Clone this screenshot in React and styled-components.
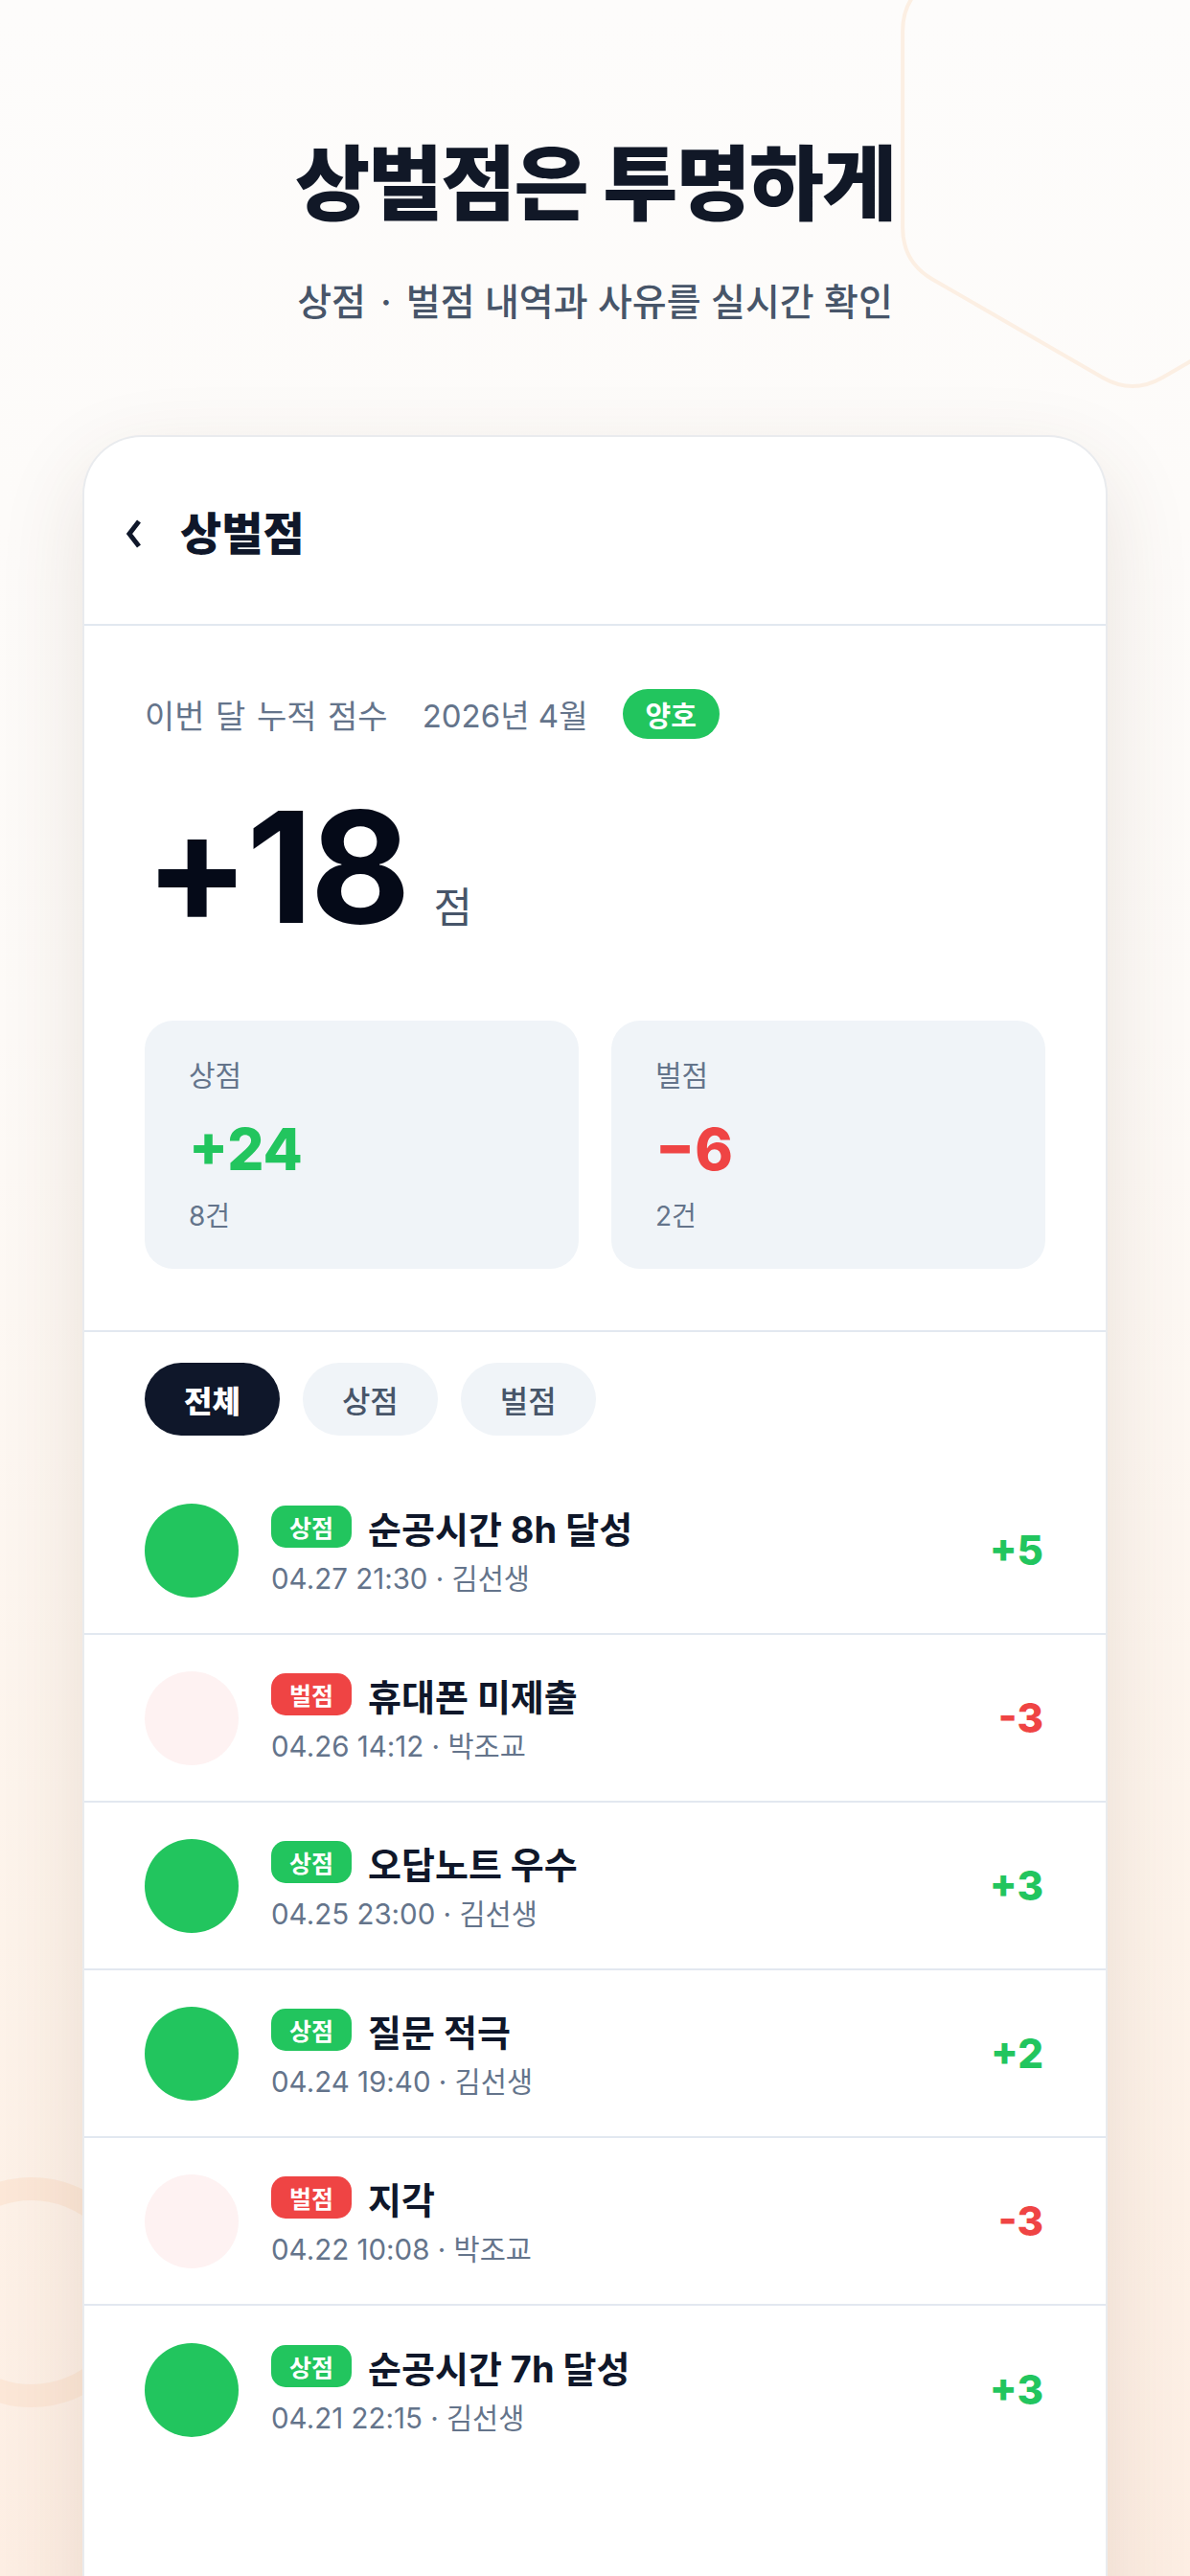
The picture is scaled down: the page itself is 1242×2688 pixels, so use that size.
import React from 'react';
import styled, { createGlobalStyle } from 'styled-components';

const GlobalStyle = createGlobalStyle`
  * {
    box-sizing: border-box;
  }

  body {
    margin: 0;
    font-family: Inter, 'Noto Sans CJK KR', sans-serif;
    color: #0f172a;
  }
`;

const StyledPage = styled.div`
  position: relative;
  width: 1242px;
  height: 2688px;
  overflow: hidden;
  background: linear-gradient(180deg, #fdfcfb 0%, #fdfaf7 40%, #fdf3ea 75%, #fdeee3 100%);
`;

const StyledDecor = styled.svg`
  position: absolute;
  pointer-events: none;
`;

const StyledHero = styled.header`
  position: relative;
  display: flex;
  flex-direction: column;
  align-items: center;
  padding-top: 143px;
  height: 454px;

  h1 {
    margin: 0;
    font-size: 85px;
    line-height: 100px;
    font-weight: 800;
    letter-spacing: -2px;
    color: #111827;
  }

  p {
    margin: 48px 0 0;
    font-size: 39px;
    line-height: 48px;
    font-weight: 500;
    color: #475569;
  }

  p b {
    margin: 0 15px;
    font-weight: 500;
  }
`;

const StyledPhone = styled.section`
  position: relative;
  margin: 0 86px;
  height: 2300px;
  background: #fff;
  border: 2px solid #e9ebee;
  border-bottom: none;
  border-radius: 62px 62px 0 0;
  box-shadow: 0 30px 90px rgba(90, 60, 30, 0.12);
`;

const StyledTopBar = styled.div`
  display: flex;
  align-items: center;
  gap: 40px;
  height: 197px;
  padding: 6px 44px 0;
  border-bottom: 2px solid #e2e8f0;

  h2 {
    margin: 0;
    font-size: 47px;
    line-height: 56px;
    font-weight: 800;
    color: #0f172a;
  }
`;

const StyledSummary = styled.div`
  padding: 66px 63px 64px;
  border-bottom: 2px solid #e2e8f0;
`;

const StyledMetaRow = styled.div`
  display: flex;
  align-items: center;
  gap: 36px;
  height: 52px;
  font-size: 33px;
  color: #64748b;

  .label {
    font-size: 34px;
    word-spacing: 2px;
  }
`;

const StyledPill = styled.span`
  display: inline-flex;
  align-items: center;
  justify-content: center;
  height: 52px;
  padding: 0 24px;
  border-radius: 26px;
  background: ${({ tone }) => (tone === 'red' ? '#ef4444' : '#22c55e')};
  color: #fff;
  font-size: 29px;
  font-weight: 700;
`;

const StyledTotal = styled.div`
  display: flex;
  align-items: baseline;
  margin-top: 54px;

  strong {
    font-size: 161px;
    line-height: 160px;
    font-weight: 700;
    letter-spacing: -3px;
    color: #050a18;
  }

  span {
    margin-left: 27px;
    font-size: 44px;
    color: #475569;
  }
`;

const StyledStatGrid = styled.div`
  display: grid;
  grid-template-columns: 1fr 1fr;
  gap: 34px;
  margin-top: 80px;
`;

const StyledStatCard = styled.div`
  display: flex;
  flex-direction: column;
  height: 259px;
  padding: 36px 46px;
  border-radius: 30px;
  background: #f0f4f8;

  .label {
    font-size: 30px;
    line-height: 42px;
    color: #64748b;
  }

  .value {
    margin-top: 21px;
    font-size: 60px;
    line-height: 70px;
    font-weight: 800;
    color: ${({ tone }) => (tone === 'red' ? '#ef4444' : '#22c55e')};
  }

  .count {
    margin-top: 16px;
    font-size: 28px;
    line-height: 38px;
    color: #64748b;
  }
`;

const StyledFilters = styled.div`
  display: flex;
  gap: 24px;
  padding: 32px 63px 33px;
`;

const StyledChip = styled.button`
  height: 76px;
  padding: 0 41px;
  border: none;
  border-radius: 38px;
  font-family: inherit;
  font-size: 32px;
  font-weight: ${({ active }) => (active ? 800 : 500)};
  background: ${({ active }) => (active ? '#0f172a' : '#f0f4f8')};
  color: ${({ active }) => (active ? '#fff' : '#475569')};
`;

const StyledRow = styled.div`
  display: flex;
  align-items: center;
  height: 175px;
  padding: 0 65px 0 63px;
  border-bottom: 2px solid #e2e8f0;

  &:last-child {
    border-bottom: none;
  }
`;

const StyledDot = styled.div`
  flex: none;
  width: 98px;
  height: 98px;
  border-radius: 50%;
  background: ${({ tone }) => (tone === 'red' ? '#fef2f2' : '#22c55e')};
`;

const StyledRowBody = styled.div`
  display: flex;
  flex-direction: column;
  gap: 13px;
  margin-left: 34px;
`;

const StyledRowHead = styled.div`
  display: flex;
  align-items: center;
  gap: 17px;
  height: 46px;
`;

const StyledRowTitle = styled.span`
  font-size: 38px;
  font-weight: 700;
  color: #0f172a;
`;

const StyledTag = styled.span`
  display: inline-flex;
  align-items: center;
  height: 44px;
  padding: 0 19px;
  border-radius: 15px;
  background: ${({ tone }) => (tone === 'red' ? '#ef4444' : '#22c55e')};
  color: #fff;
  font-size: 25px;
  font-weight: 700;
`;

const StyledRowMeta = styled.div`
  font-size: 29.5px;
  line-height: 36px;
  color: #64748b;
`;

const StyledDelta = styled.div`
  margin-left: auto;
  font-size: 42px;
  font-weight: 800;
  color: ${({ tone }) => (tone === 'red' ? '#ef4444' : '#22c55e')};
`;

const hexPath = (cx, cy, r, round) => {
  const pts = [];
  for (let i = 0; i < 6; i += 1) {
    const a = ((-90 + i * 60) * Math.PI) / 180;
    pts.push([cx + r * Math.cos(a), cy + r * Math.sin(a)]);
  }
  const lerp = (a, b, t) => [a[0] + (b[0] - a[0]) * t, a[1] + (b[1] - a[1]) * t];
  let d = '';
  pts.forEach((p, i) => {
    const prev = pts[(i + 5) % 6];
    const next = pts[(i + 1) % 6];
    const t = round / r;
    const s = lerp(p, prev, t);
    const e = lerp(p, next, t);
    d += `${i === 0 ? 'M' : 'L'}${s[0]},${s[1]} Q${p[0]},${p[1]} ${e[0]},${e[1]} `;
  });
  return `${d}Z`;
};

const entries = [
  { id: 1, tone: 'green', tag: '상점', title: '순공시간 8h 달성', meta: '04.27 21:30 · 김선생', delta: '+5' },
  { id: 2, tone: 'red', tag: '벌점', title: '휴대폰 미제출', meta: '04.26 14:12 · 박조교', delta: '-3' },
  { id: 3, tone: 'green', tag: '상점', title: '오답노트 우수', meta: '04.25 23:00 · 김선생', delta: '+3' },
  { id: 4, tone: 'green', tag: '상점', title: '질문 적극', meta: '04.24 19:40 · 김선생', delta: '+2' },
  { id: 5, tone: 'red', tag: '벌점', title: '지각', meta: '04.22 10:08 · 박조교', delta: '-3' },
  { id: 6, tone: 'green', tag: '상점', title: '순공시간 7h 달성', meta: '04.21 22:15 · 김선생', delta: '+3' },
];

const App = () => (
  <StyledPage>
    <GlobalStyle />

    <StyledDecor width="1242" height="460" style={{ left: 0, top: 0 }}>
      <path d={hexPath(1182, 135, 277, 36)} fill="none" stroke="#fcefe3" strokeWidth="4" />
    </StyledDecor>
    <StyledDecor width="200" height="300" style={{ left: 0, top: 2242 }}>
      <circle cx="33" cy="150" r="108" fill="none" stroke="#fbe5d3" strokeWidth="24" opacity="0.8" />
    </StyledDecor>

    <StyledHero>
      <h1>상벌점은 투명하게</h1>
      <p>
        상점<b>·</b>벌점 내역과 사유를 실시간 확인
      </p>
    </StyledHero>

    <StyledPhone>
      <StyledTopBar>
        <svg width="16" height="30" viewBox="0 0 16 30">
          <polyline points="13,2 3,15 13,28" fill="none" stroke="#0f172a" strokeWidth="5" strokeLinejoin="miter" />
        </svg>
        <h2>상벌점</h2>
      </StyledTopBar>

      <StyledSummary>
        <StyledMetaRow>
          <span className="label">이번 달 누적 점수</span>
          <span>2026년 4월</span>
          <StyledPill>양호</StyledPill>
        </StyledMetaRow>

        <StyledTotal>
          <strong>+18</strong>
          <span>점</span>
        </StyledTotal>

        <StyledStatGrid>
          <StyledStatCard tone="green">
            <span className="label">상점</span>
            <span className="value">+24</span>
            <span className="count">8건</span>
          </StyledStatCard>
          <StyledStatCard tone="red">
            <span className="label">벌점</span>
            <span className="value">−6</span>
            <span className="count">2건</span>
          </StyledStatCard>
        </StyledStatGrid>
      </StyledSummary>

      <StyledFilters>
        <StyledChip active>전체</StyledChip>
        <StyledChip>상점</StyledChip>
        <StyledChip>벌점</StyledChip>
      </StyledFilters>

      {entries.map(item => (
        <StyledRow key={item.id}>
          <StyledDot tone={item.tone} />
          <StyledRowBody>
            <StyledRowHead>
              <StyledTag tone={item.tone}>{item.tag}</StyledTag>
              <StyledRowTitle>{item.title}</StyledRowTitle>
            </StyledRowHead>
            <StyledRowMeta>{item.meta}</StyledRowMeta>
          </StyledRowBody>
          <StyledDelta tone={item.tone}>{item.delta}</StyledDelta>
        </StyledRow>
      ))}
    </StyledPhone>
  </StyledPage>
);

export default App;
